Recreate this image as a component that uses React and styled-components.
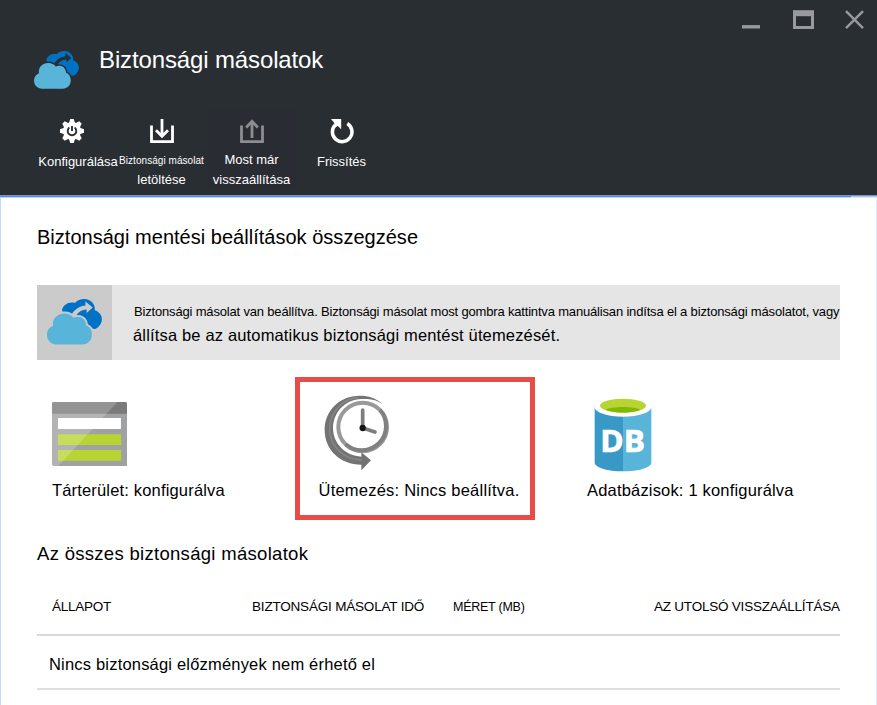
import React from 'react';
import styled, { createGlobalStyle } from 'styled-components';

const Global = createGlobalStyle`
  * { box-sizing: border-box; }
  body { margin: 0; background: #fff; color: #000; font-family: "Liberation Sans", Arial, sans-serif; }
  h1, h2, p { margin: 0; font-weight: 400; }
  svg { display: block; flex: none; }
`;

const Blade = styled.main`
  width: 877px;
  height: 705px;
  overflow: hidden;
  display: flex;
  flex-direction: column;
`;

const Header = styled.header`
  flex: none;
  height: 195px;
  background: #292e32;
  color: #fff;
`;

const WindowControls = styled.div`
  height: 46px;
  padding: 10px 13px 0 0;
  display: flex;
  justify-content: flex-end;
`;

const TitleRow = styled.div`
  height: 63px;
  padding-left: 34px;
  display: flex;
  gap: 20px;
`;

const CloudSlot = styled.div`
  padding-top: 5px;
`;

const Title = styled.h1`
  font-size: 24px;
  line-height: 28px;
  letter-spacing: -0.13px;
`;

const Toolbar = styled.nav`
  display: flex;
  padding-left: 26.5px;
`;

const Tool = styled.div`
  width: 90px;
  height: 80px;
  padding-top: 9px;
  display: flex;
  flex-direction: column;
  align-items: center;
  background: ${(p) => (p.$active ? '#292c33' : 'transparent')};
`;

const ToolLabel = styled.div`
  margin-top: ${(p) => p.$top}px;
  padding-left: ${(p) => p.$shift || 0}px;
  display: flex;
  flex-direction: column;
  align-items: center;
  font-size: 13px;
  line-height: 20px;
  white-space: nowrap;
`;

const SmallLine = styled.span`
  font-size: 10px;
  letter-spacing: 0.05px;
  padding-top: 1px;
  margin-bottom: -1px;
`;

const Progress = styled.div`
  flex: none;
  height: 3px;
  border-top: 1px solid #7f93bb;
  display: grid;
  grid-template-columns: 851px 1fr;
  background: linear-gradient(#a3c1f6 50%, #dbe7fd 50%);

  &::before {
    content: '';
    background: linear-gradient(#4d8cf5 50%, #bcd3fb 50%);
  }
`;

const Body = styled.section`
  flex: 1;
  border-left: 1px solid #c3d7fb;
  border-right: 1px solid #e3ecfd;
  padding: 27px 37px 0 36px;
`;

const SectionTitle = styled.h2`
  font-size: ${(p) => p.$size}px;
  line-height: 24px;
  letter-spacing: ${(p) => p.$spacing}px;
  white-space: nowrap;
`;

const Banner = styled.div`
  margin-top: 36px;
  width: 802.5px;
  height: 75px;
  display: flex;
  background: #e5e5e5;
`;

const BannerIcon = styled.div`
  flex: none;
  width: 75px;
  padding: 14px 0 0 10px;
  background: #cbcbcb;
`;

const BannerText = styled.div`
  padding: 15px 0 0 21px;
  white-space: nowrap;
`;

const BannerLead = styled.p`
  font-size: 13px;
  line-height: 24px;
  letter-spacing: -0.173px;
  padding-left: 1px;
`;

const BannerNote = styled.p`
  font-size: 16.5px;
  line-height: 22px;
  letter-spacing: 0.16px;
`;

const Tiles = styled.div`
  margin-top: 17px;
  display: grid;
  grid-template-columns: 240px 240px 1fr;
  column-gap: 18px;
`;

const Tile = styled.div`
  height: 143px;
  border: 5px solid ${(p) => (p.$selected ? '#e84c47' : 'transparent')};
  padding-left: ${(p) => p.$indent}px;
`;

const TileIcon = styled.div`
  height: 98px;
  padding: ${(p) => p.$top}px 0 0 ${(p) => p.$left || 0}px;
`;

const TileLabel = styled.p`
  font-size: 16.5px;
  line-height: 20px;
  letter-spacing: ${(p) => p.$spacing}px;
  white-space: nowrap;
`;

const Backups = styled.section`
  margin-top: 22px;
`;

const HeadRow = styled.div`
  width: 802.5px;
  height: 70px;
  padding: 31px 0 0 15px;
  display: grid;
  grid-template-columns: 200px 201px 201px 1fr;
  border-bottom: 2px solid #d9d9d9;
  font-size: 13.5px;
  line-height: 20px;
  white-space: nowrap;
`;

const HeadCell = styled.span`
  letter-spacing: ${(p) => p.$spacing}px;
  font-size: ${(p) => p.$size || 13.5}px;
`;

const EmptyRow = styled.div`
  width: 802.5px;
  height: 54px;
  padding: 18px 0 0 12px;
  border-bottom: 2px solid #dedede;
  font-size: 16.5px;
  line-height: 20px;
  letter-spacing: 0.19px;
`;

const CloudsIcon = ({ width, height, back }) => (
  <svg width={width} height={height} viewBox="0 0 136 115" preserveAspectRatio="none">
    <path fill="#0072c6" d="M37 28C40 15 53 6 69 10C80-3 103-3 112 9C117 15 119 21 118 28C131 32 138 44 135 56C132 66 126 72 119 75L60 70Z" />
    <path fill={back} d="M57 46C64 30 76 18 95 16V6L113 21L98 35V26C84 27 77 33 72 42Z" />
    <path
      fill="#59b4d9"
      stroke={back}
      strokeWidth="9"
      paintOrder="stroke"
      d="M25 114C10 114 0 103 0 90C0 78 6 71 15 67C12 50 25 36 43 36C53 36 61 40 66 47C80 40 96 48 97 66C106 69 111 77 111 89C111 103 101 114 87 114Z"
    />
  </svg>
);

const GearIcon = () => (
  <svg width="26" height="26" viewBox="-13 -13 26 26">
    <g fill="#fff">
      <circle r="9" />
      {[0, 45, 90, 135, 180, 225, 270, 315].map((a) => (
        <path key={a} d="M-3.4-7L-1.7-12H1.7L3.4-7Z" transform={`rotate(${a})`} />
      ))}
    </g>
    <path d="M-2.6-3.4A4.3 4.3 0 1 0 2.6-3.4" fill="none" stroke="#292e32" strokeWidth="1.9" />
    <path d="M0-5V0" stroke="#292e32" strokeWidth="1.9" />
  </svg>
);

const TrayIcon = ({ up }) => (
  <svg width="26" height="26" viewBox="0 0 26 26" fill="none" stroke={up ? '#8b8d91' : '#fff'} strokeWidth="2.8">
    <path d="M2.5 7.5V23.6H23.5V7.5" />
    {up ? <path d="M13 20V3M7.2 9.5L13 3.2L18.8 9.5" /> : <path d="M13 1V18M7 12.2L13 18.2L19 12.2" />}
  </svg>
);

const RefreshIcon = () => (
  <svg width="26" height="26" viewBox="0 0 26 26">
    <path d="M18.3 5.5A9.8 9.8 0 1 1 6.2 7" fill="none" stroke="#fff" strokeWidth="3.5" />
    <path d="M2 1H12.2V11.2L8.8 8L6 9.2L5 4.4Z" fill="#fff" />
  </svg>
);

const StorageIcon = () => (
  <svg width="75" height="64" viewBox="0 0 225 192">
    <path d="M6 0H219Q225 0 225 6V192H6Q0 192 0 186V6Q0 0 6 0Z" fill="#a0a1a2" />
    <path d="M0 35V6Q0 0 6 0H219Q225 0 225 6V35Z" fill="#7a7a7a" />
    <path d="M18 97H207V129H18ZM18 144H207V176H18Z" fill="#b8d432" />
    <path d="M6 0H196L19 192H6Q0 192 0 186V6Q0 0 6 0Z" fill="#fff" opacity="0.2" />
    <path d="M18 48H207V81H18Z" fill="#fff" />
  </svg>
);

const ClockIcon = () => (
  <svg width="66" height="76" viewBox="101 75 198 228">
    <path
      d="M278 103C250 84 230 87 213 87C165 88 128 127 128 175C128 220 165 258 213 260V247L242 271L213 301V284C150 284 103 240 103 180C103 120 150 77 207 77C235 77 258 84 278 103Z"
      fill="#737373"
    />
    <path d="M205 82C155 86 118 127 118 178C118 228 160 269 216 270" fill="none" stroke="#858585" strokeWidth="5" />
    <circle cx="217" cy="171" r="73" fill="#fff" stroke="#999" strokeWidth="12" />
    <path d="M269 120A73 73 0 0 1 166 223" fill="none" stroke="#808080" strokeWidth="12" />
    <path d="M217 120V174L254 186" fill="none" stroke="#7d7d7d" strokeWidth="11" strokeLinecap="round" />
    <circle cx="217" cy="174" r="9.5" fill="#151515" />
  </svg>
);

const DatabaseIcon = () => (
  <svg width="58" height="74" viewBox="72 38 174 222">
    <path d="M74 64V232C74 246 112 258 159 258V64Z" fill="#3999c6" />
    <path d="M159 64V258C206 258 244 246 244 232V64Z" fill="#59b4d9" />
    <ellipse cx="159" cy="64" rx="86" ry="30" fill="#fff" />
    <ellipse cx="159" cy="61" rx="69" ry="21" fill="#b8d432" />
    <path d="M107 73C125 62 193 62 211 73C190 84 128 84 107 73Z" fill="#7fba00" />
    <text
      x="91"
      y="199"
      fill="#fff"
      stroke="#fff"
      strokeWidth="2"
      fontFamily="Open Sans, sans-serif"
      fontWeight="700"
      fontSize="92"
      textLength="134"
      lengthAdjust="spacingAndGlyphs"
    >
      DB
    </text>
  </svg>
);

const WindowIcons = () => (
  <svg width="123" height="20" viewBox="0 0 123 20" stroke="#999a9e" fill="none">
    <path d="M1 16.8H19" strokeWidth="3.4" />
    <path d="M53.5 3V17.5H71.5V3" strokeWidth="3" />
    <path d="M52 3.2H73" strokeWidth="6" />
    <path d="M105 1.2L122 18.2M122 1.2L105 18.2" strokeWidth="2.4" />
  </svg>
);

export default function App() {
  return (
    <Blade>
      <Global />
      <Header>
        <WindowControls>
          <WindowIcons />
        </WindowControls>
        <TitleRow>
          <CloudSlot>
            <CloudsIcon width={45} height={38} back="#292e32" />
          </CloudSlot>
          <Title>Biztonsági másolatok</Title>
        </TitleRow>
        <Toolbar>
          <Tool>
            <GearIcon />
            <ToolLabel $top={8} $shift={13}>Konfigurálása</ToolLabel>
          </Tool>
          <Tool>
            <TrayIcon />
            <ToolLabel $top={6}>
              <SmallLine>Biztonsági másolat</SmallLine>
              <span>letöltése</span>
            </ToolLabel>
          </Tool>
          <Tool $active>
            <TrayIcon up />
            <ToolLabel $top={6}>
              <span>Most már</span>
              <span>visszaállítása</span>
            </ToolLabel>
          </Tool>
          <Tool>
            <RefreshIcon />
            <ToolLabel $top={8}>Frissítés</ToolLabel>
          </Tool>
        </Toolbar>
      </Header>
      <Progress />
      <Body>
        <SectionTitle $size={20} $spacing={0.02}>Biztonsági mentési beállítások összegzése</SectionTitle>
        <Banner>
          <BannerIcon>
            <CloudsIcon width={55} height={46} back="#cbcbcb" />
          </BannerIcon>
          <BannerText>
            <BannerLead>
              Biztonsági másolat van beállítva. Biztonsági másolat most gombra kattintva manuálisan indítsa el a biztonsági másolatot, vagy
            </BannerLead>
            <BannerNote>állítsa be az automatikus biztonsági mentést ütemezését.</BannerNote>
          </BannerText>
        </Banner>
        <Tiles>
          <Tile $indent={10}>
            <TileIcon $top={20}><StorageIcon /></TileIcon>
            <TileLabel $spacing={0.17}>Tárterület: konfigurálva</TileLabel>
          </Tile>
          <Tile $indent={18.5} $selected>
            <TileIcon $top={13} $left={5}><ClockIcon /></TileIcon>
            <TileLabel $spacing={0.22}>Ütemezés: Nincs beállítva.</TileLabel>
          </Tile>
          <Tile $indent={29}>
            <TileIcon $top={15.5} $left={7}><DatabaseIcon /></TileIcon>
            <TileLabel $spacing={0.18}>Adatbázisok: 1 konfigurálva</TileLabel>
          </Tile>
        </Tiles>
        <Backups>
          <SectionTitle $size={18.5} $spacing={0.3}>Az összes biztonsági másolatok</SectionTitle>
          <HeadRow>
            <HeadCell $spacing={-0.25}>ÁLLAPOT</HeadCell>
            <HeadCell $spacing={-0.19}>BIZTONSÁGI MÁSOLAT IDŐ</HeadCell>
            <HeadCell $spacing={-0.25} $size={12.5}>MÉRET (MB)</HeadCell>
            <HeadCell $spacing={-0.22}>AZ UTOLSÓ VISSZAÁLLÍTÁSA</HeadCell>
          </HeadRow>
          <EmptyRow>Nincs biztonsági előzmények nem érhető el</EmptyRow>
        </Backups>
      </Body>
    </Blade>
  );
}
